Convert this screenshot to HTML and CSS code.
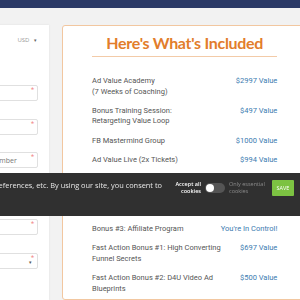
FILE: index.html
```html
<!DOCTYPE html>
<html>
<head>
<meta charset="utf-8">
<link rel="stylesheet" href="styles.css">
</head>
<body>
<div class="topbar"></div>
<div class="main">
  <div class="form-card">
    <div class="currency">USD <span class="caret">&#9662;</span></div>
    <div class="fields">
      <div class="field"><span class="req">*</span></div>
      <div class="field"><span class="req">*</span></div>
      <div class="field"><span class="ph">Phone Number</span><span class="req">*</span></div>
      <div class="field"><span class="req">*</span></div>
      <div class="field"><span class="req">*</span></div>
      <div class="field"><span class="req">*</span><span class="sel">&#9662;</span></div>
    </div>
  </div>
  <div class="offer">
    <h2 class="offer-title">Here's What's Included</h2>
    <div class="items">
      <div class="item">Ad Value Academy<br>(7 Weeks of Coaching)</div><div class="val">$2997 Value</div>
      <div class="item">Bonus Training Session:<br>Retargeting Value Loop</div><div class="val">$497 Value</div>
      <div class="item">FB Mastermind Group</div><div class="val">$1000 Value</div>
      <div class="item">Ad Value Live (2x Tickets)</div><div class="val">$994 Value</div>
      <div class="item">Bonus #1: Ad Templates</div><div class="val">$297 Value</div>
      <div class="item">Bonus #2: Done For You<br>Audience Research</div><div class="val">$497 Value</div>
      <div class="item">Bonus #3: Affiliate Program</div><div class="val">You're In Control!</div>
      <div class="item">Fast Action Bonus #1: High Converting<br>Funnel Secrets</div><div class="val">$697 Value</div>
      <div class="item">Fast Action Bonus #2: D4U Video Ad<br>Blueprints</div><div class="val">$500 Value</div>
    </div>
  </div>
</div>
<div class="cookie">
  <div class="cookie-text"><span dir="ltr">We use cookies to remember your preferences, etc. By using our site, you consent to</span></div>
  <div class="accept">Accept all<br>cookies</div>
  <div class="toggle"><span class="knob"></span></div>
  <div class="essential">Only essential<br>cookies</div>
  <button class="save">SAVE</button>
</div>
</body>
</html>
```
FILE: styles.css
```css
html, body { margin: 0; padding: 0; }
body {
  background: #f2f2f2;
  font-family: Roboto, "Liberation Sans", sans-serif;
  width: 300px;
  height: 300px;
  overflow: hidden;
}
.topbar { height: 8px; background: #2b3966; }
.main {
  display: flex;
  gap: 13px;
  padding-top: 17px;
  align-items: flex-start;
}
.form-card {
  flex: 0 0 100px;
  margin-left: -51px;
  height: 275px;
  background: #fff;
  box-shadow: 0 0 2px rgba(0,0,0,0.08);
  box-sizing: border-box;
  padding: 10px 11px 0 11px;
}
.currency {
  text-align: right;
  font-size: 6px;
  line-height: 10px;
  color: #999;
  font-family: "Open Sans", sans-serif;
  padding-right: 1px;
}
.caret { font-size: 5px; color: #666; margin-left: 3px; }
.fields {
  display: flex;
  flex-direction: column;
  gap: 17.5px;
  margin-top: 40px;
}
.field {
  position: relative;
  height: 16px;
  border: 1px solid #e0e0e0;
  border-radius: 2px;
  box-sizing: border-box;
  display: flex;
  align-items: center;
  padding-left: 6px;
}
.ph { font-size: 7px; color: #777; font-family: "Open Sans", sans-serif; }
.req {
  position: absolute;
  right: 3px;
  top: 0;
  font-size: 7px;
  line-height: 8px;
  color: #f28b8b;
}
.sel {
  position: absolute;
  right: 5px;
  top: 5px;
  font-size: 5px;
  color: #555;
}
.offer {
  flex: 0 0 236px;
  height: 275px;
  background: #fff;
  border: 1px solid #f2c7a0;
  border-radius: 3px;
  box-sizing: border-box;
  padding: 7px 29px 0 29px;
}
.offer-title {
  margin: 0;
  font-family: Lato, sans-serif;
  font-weight: 700;
  font-size: 16px;
  letter-spacing: -0.3px;
  line-height: 20px;
  color: #e27d2b;
  text-align: center;
  padding-bottom: 3px;
  border-bottom: 1.5px solid #f3cba8;
}
.items {
  display: grid;
  grid-template-columns: 1fr auto;
  row-gap: 8.9px;
  margin-top: 19px;
  font-size: 7.5px;
  line-height: 10.5px;
}
.item { color: #555; white-space: nowrap; }
.val { color: #3b7bb0; text-align: right; white-space: nowrap; }
.cookie {
  position: fixed;
  left: 0;
  right: 0;
  top: 173px;
  height: 43px;
  background: #303030;
  display: flex;
  align-items: center;
  box-sizing: border-box;
  padding: 7px 6px 20px 0;
  font-family: "Open Sans", sans-serif;
}
.cookie-text {
  flex: none;
  width: 162px;
  direction: rtl;
  text-align: right;
  font-size: 7.4px;
  color: #e6e6e6;
  white-space: nowrap;
  align-self: flex-start;
  line-height: 10px;
}
.cookie-text span { unicode-bidi: isolate; }
.accept {
  margin-left: auto;
  font-size: 5.5px;
  line-height: 7px;
  color: #fff;
  text-align: right;
  font-weight: 600;
}
.toggle {
  width: 20px;
  height: 10px;
  margin-left: 4px;
  border-radius: 5px;
  background: #555;
  display: flex;
  align-items: center;
  padding-left: 1px;
  box-sizing: border-box;
}
.knob { width: 8px; height: 8px; border-radius: 50%; background: #fff; }
.essential {
  margin-left: 4px;
  width: 38px;
  font-size: 5.5px;
  line-height: 7px;
  color: #8a8a8a;
}
.save {
  margin-left: 5px;
  width: 22px;
  height: 16px;
  border: 0;
  border-radius: 1px;
  background: #7cc242;
  color: #fff;
  font-family: "Open Sans", sans-serif;
  font-size: 5.5px;
  padding: 0;
}
```
